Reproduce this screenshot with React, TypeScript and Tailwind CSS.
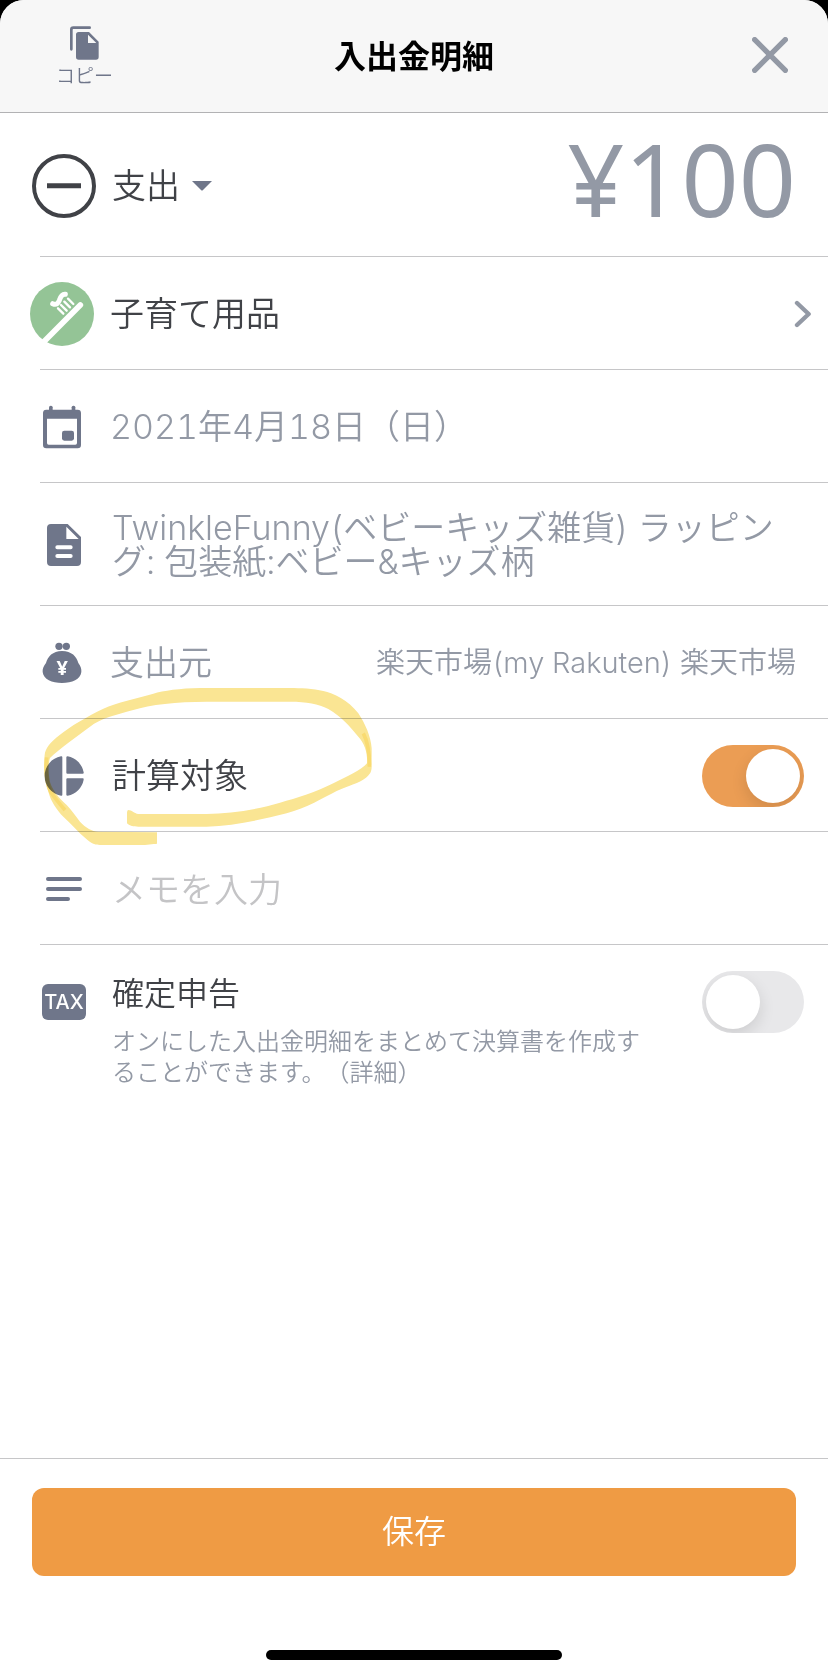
import { useState, type ReactNode } from "react"

function CopyIcon() {
  return (
    <svg className="w-8 h-9" viewBox="204 78 96 108" aria-hidden="true">
      <path d="M211 151V92q0-6 6-6H266" fill="none" stroke="#6f768a" strokeWidth="8" strokeLinecap="round" />
      <path
        fillRule="evenodd"
        fill="#6f768a"
        d="M233 99H264L293 128V174q0 8-8 8H233q-8 0-8-8V107q0-8 8-8ZM261 107V132H286Z"
      />
    </svg>
  )
}

function CloseIcon() {
  return (
    <svg className="size-9" viewBox="0 0 108 108" fill="none" stroke="#9399a5" strokeWidth="16" strokeLinecap="round" aria-hidden="true">
      <path d="M8 8L100 100M100 8L8 100" />
    </svg>
  )
}

function MinusIcon() {
  return (
    <svg className="size-16" viewBox="0 0 192 192" fill="none" stroke="#404247" aria-hidden="true">
      <circle cx="96" cy="96" r="90" strokeWidth="12" />
      <path d="M45 95H147" strokeWidth="15" />
    </svg>
  )
}

function ToothbrushIcon() {
  return (
    <svg className="size-16" viewBox="90 123 192 192" fill="none" stroke="#fff" strokeLinecap="round" aria-hidden="true">
      <circle cx="186" cy="219" r="96" fill="#94c496" stroke="none" />
      <path d="M130 304L241 192" strokeWidth="17" />
      <path d="M174 202L190 218M183 192L200 209M193 182L210 199M204 173L220 189" strokeWidth="7" />
      <path d="M158 188C169 193 174 188 178 178C182 166 188 159 196 160" strokeWidth="15" />
    </svg>
  )
}

function CalendarIcon() {
  return (
    <svg className="w-10 h-11" viewBox="126 490 120 132" fill="#6f768a" aria-hidden="true">
      <rect x="147" y="492" width="11" height="20" rx="5" />
      <rect x="215" y="492" width="11" height="20" rx="5" />
      <path
        fillRule="evenodd"
        d="M139 504H233q10 0 10 10V610q0 10-10 10H139q-10 0-10-10V514q0-10 10-10ZM141 531V604q0 5 5 5H226q5 0 5-5V531Z"
      />
      <rect x="186" y="567" width="36" height="30" rx="7" />
    </svg>
  )
}

function DocumentIcon() {
  return (
    <svg className="w-9 h-11" viewBox="141 126 108 132" aria-hidden="true">
      <path
        fillRule="evenodd"
        fill="#6f768a"
        d="M156 129H206L246 168V243q0 12-12 12H156q-12 0-12-12V141q0-12 12-12ZM202 137V174H239Z"
      />
      <path d="M175 199H215M175 225H215" stroke="#fff" strokeWidth="12" strokeLinecap="round" />
    </svg>
  )
}

function PurseIcon() {
  return (
    <svg className="w-10 h-11" viewBox="124 485 120 132" fill="#6f768a" aria-hidden="true">
      <circle cx="175" cy="501" r="11" />
      <circle cx="197" cy="501" r="11" />
      <path d="M184 515C213 515 228 532 233 551C240 560 243 569 242 578C240 600 214 611 184 611C154 611 128 600 126 578C125 569 129 560 136 551C141 532 156 515 184 515Z" />
      <text x="185" y="587" textAnchor="middle" fill="#fff" className="font-['Noto_Sans'] font-bold text-[60px]">
        ¥
      </text>
    </svg>
  )
}

function PieIcon() {
  return (
    <svg className="size-10" viewBox="132 257 120 120" fill="#6f768a" aria-hidden="true">
      <path d="M183 258A60 60 0 0 0 183 376Q187 377 187 373V261Q187 257 183 258Z" />
      <path d="M203 258A60 60 0 0 1 251 306Q252 310 248 310H202Q199 310 199 307V261Q199 258 203 258Z" />
      <path d="M203 376A60 60 0 0 0 251 328Q252 324 248 324H202Q199 324 199 327V373Q199 376 203 376Z" />
    </svg>
  )
}

function LinesIcon() {
  return (
    <svg className="w-9 h-6" viewBox="138 618 108 72" stroke="#6f768a" strokeWidth="12" strokeLinecap="round" aria-hidden="true">
      <path d="M144 624H240M144 654H240M144 684H204" />
    </svg>
  )
}

function ChevronIcon() {
  return (
    <svg className="w-5 h-7" viewBox="0 0 60 84" fill="none" stroke="#9399a5" strokeWidth="13" strokeLinecap="round" strokeLinejoin="round" aria-hidden="true">
      <path d="M9 9L44 42L9 75" />
    </svg>
  )
}

// highlighter stroke around the row
function Highlight() {
  return (
    <svg className="absolute -top-[49px] left-0 w-[414px] h-[180px] pointer-events-none mix-blend-multiply" viewBox="0 0 1242 540" aria-hidden="true">
      <path
        fill="#fae593"
        d="M471 487L295 485C275 484 258 474 240 455C225 436 214 420 200 405C180 388 150 355 148 325C144 300 146 275 150 264C180 235 230 200 270 170C300 145 355 133 400 120C450 104 530 95 620 95H870C920 95 955 102 985 117C1025 140 1050 170 1075 200C1095 222 1103 250 1101 280C1085 300 1040 320 1000 340C950 365 890 385 840 398C770 420 690 430 620 432H415C402 430 395 420 385 420Q381 421 381 428V460C390 469 400 470 415 470H620C700 468 780 450 860 430C920 414 970 383 1010 363C1050 345 1075 340 1098 323C1110 313 1115 305 1115 290V235C1113 200 1095 160 1075 130C1045 90 1000 70 970 63C940 56 900 54 870 54H600C540 55 490 62 460 71C410 85 350 98 310 116C260 140 210 170 180 194C150 217 136 235 134 255C130 290 131 330 146 368C152 392 170 420 190 440C215 462 235 488 260 508C275 521 285 525 300 525H420C440 525 460 522 471 521Z"
      />
      <path
        fill="none"
        stroke="#f8d45a"
        strokeOpacity="0.6"
        strokeWidth="11"
        d="M140 262C137 300 139 340 152 366C165 385 180 403 195 420M1090 190C1103 215 1109 240 1108 290"
      />
    </svg>
  )
}

type RowProps = {
  icon: ReactNode
  children: ReactNode
  picker?: boolean
  className?: string
}

function Row({ icon, children, picker, className = "h-28" }: RowProps) {
  return (
    <div className="ml-10 border-b border-[#c6c6c8]">
      <div className={`flex items-center gap-4 pt-0.5 ${picker ? "-ml-[10px]" : "-ml-2"} ${className}`}>
        <div className="w-16 shrink-0 flex justify-center">{icon}</div>
        {children}
      </div>
    </div>
  )
}

type ToggleProps = {
  id: string
  checked: boolean
  onChange: (checked: boolean) => void
}

function Toggle({ id, checked, onChange }: ToggleProps) {
  return (
    <input
      id={id}
      type="checkbox"
      role="switch"
      checked={checked}
      onChange={(e) => onChange(e.target.checked)}
      className="appearance-none shrink-0 overflow-hidden w-[102px] h-[62px] p-1 rounded-full bg-[#e8e8ea] checked:bg-[#eb9d54] cursor-pointer before:block before:size-[54px] before:rounded-full before:bg-white before:shadow-[0_6px_16px_rgba(0,0,0,0.12)] checked:before:ml-10"
    />
  )
}

export default function App() {
  const [included, setIncluded] = useState(true)
  const [tax, setTax] = useState(false)
  const [memo, setMemo] = useState("")

  return (
    <div className="min-h-screen bg-black font-['Inter','Noto_Sans_CJK_JP',sans-serif] font-[350] tabular-nums [text-spacing-trim:space-all]" lang="ja">
      <div className="min-h-screen flex flex-col bg-white rounded-t-3xl overflow-hidden">
        <header className="h-[113px] grid grid-cols-[1fr_auto_1fr] items-center px-10 pb-0.5 bg-[#f7f7f7] border-b border-[#b2b2b4]">
          <button className="justify-self-start flex flex-col items-center px-4 pt-2 text-[#6f768a]">
            <CopyIcon />
            <span className="text-[19px] leading-8">コピー</span>
          </button>
          <h1 className="text-[32px] leading-10 pb-0.5 font-bold text-black font-['Noto_Sans_CJK_JP',sans-serif]">入出金明細</h1>
          <button className="justify-self-end" aria-label="閉じる">
            <CloseIcon />
          </button>
        </header>

        <main className="text-[34px] leading-[34px] text-[#9399a5]">
          <Row icon={<MinusIcon />} className="h-[143px] pr-8">
            <div className="relative flex items-center text-[#404247]">
              <select aria-label="種別" className="appearance-none bg-transparent pr-8 h-12 outline-none">
                <option>支出</option>
                <option>収入</option>
              </select>
              <svg className="absolute right-0 w-5 h-[10px] pointer-events-none" viewBox="0 0 20 10" fill="#6f768a" aria-hidden="true">
                <path d="M0 0H20L11 9Q10 10 9 9Z" />
              </svg>
            </div>
            <span className="ml-auto pb-4 text-[100px] leading-[100px] font-[450] font-['Noto_Sans',sans-serif]">¥100</span>
          </Row>

          <Row icon={<ToothbrushIcon />} picker className="h-28 pr-3.5">
            <a href="#" className="flex-1 flex items-center justify-between text-[#404247]">
              子育て用品
              <ChevronIcon />
            </a>
          </Row>

          <Row icon={<CalendarIcon />} picker>
            <button>2021年4月18日（日）</button>
          </Row>

          <Row icon={<DocumentIcon />} className="h-[122px] pr-8">
            <p>TwinkleFunny(ベビーキッズ雑貨) ラッピング: 包装紙:ベビー&amp;キッズ柄</p>
          </Row>

          <Row icon={<PurseIcon />} picker className="h-28 pr-8">
            <button className="flex-1 flex items-center justify-between">
              支出元
              <span className="text-[29px]">楽天市場(my Rakuten) 楽天市場</span>
            </button>
          </Row>

          <div className="relative">
            <Row icon={<PieIcon />} className="h-28 pr-6">
              <label htmlFor="included" className="flex-1 text-[#404247]">
                計算対象
              </label>
              <Toggle id="included" checked={included} onChange={setIncluded} />
            </Row>
            <Highlight />
          </div>

          <Row icon={<LinesIcon />} className="h-28 pr-8">
            <input
              aria-label="メモ"
              placeholder="メモを入力"
              value={memo}
              onChange={(e) => setMemo(e.target.value)}
              className="flex-1 h-12 outline-none text-[#404247] placeholder:text-[#c4c4c6]"
            />
          </Row>

          <div className="flex items-start gap-4 pl-8 pr-6 pt-[25px]">
            <div className="w-16 h-16 shrink-0 flex items-center justify-center">
              <span className="w-11 h-9 rounded-md bg-[#6f768a] text-white text-xl leading-9 font-medium text-center">TAX</span>
            </div>
            <div className="flex-1">
              <label htmlFor="tax" className="block text-[32px] leading-[48px] text-[#404247]">
                確定申告
              </label>
              <p className="max-w-[540px] mt-2 text-2xl leading-[31px]">
                <span>オンにした入出金明細をまとめて決算書を作成することができます。</span>
                <a href="#">（詳細）</a>
              </p>
            </div>
            <div className="h-16 flex items-center">
              <Toggle id="tax" checked={tax} onChange={setTax} />
            </div>
          </div>
        </main>

        <footer className="mt-auto px-8 pt-[29px] pb-4 border-t border-[#c6c6c8]">
          <button className="w-full h-[88px] rounded-xl bg-[#ef9b44] text-white text-[32px]">保存</button>
          <div className="w-[296px] h-[10px] mt-[74px] mx-auto rounded-full bg-black" />
        </footer>
      </div>
    </div>
  )
}
